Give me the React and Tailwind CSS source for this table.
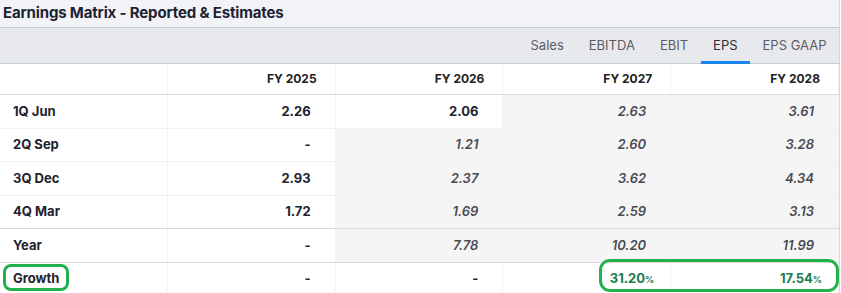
import React from 'react';

const years = ['FY 2025', 'FY 2026', 'FY 2027', 'FY 2028'];

// est: index of the first estimated column in that row
const rows = [
  { label: '1Q Jun', values: ['2.26', '2.06', '2.63', '3.61'], est: 2 },
  { label: '2Q Sep', values: ['-', '1.21', '2.60', '3.28'], est: 1 },
  { label: '3Q Dec', values: ['2.93', '2.37', '3.62', '4.34'], est: 1 },
  { label: '4Q Mar', values: ['1.72', '1.69', '2.59', '3.13'], est: 1, strong: true },
  { label: 'Year', values: ['-', '7.78', '10.20', '11.99'], est: 1, strong: true },
];

const tabs = ['Sales', 'EBITDA', 'EBIT', 'EPS', 'EPS GAAP'];

const Cell = ({ children, estimate, pad = 'pr-[24px]' }) => (
  <div
    className={`flex items-center justify-end ${pad} border-r border-[#f3f3f3] ${
      estimate ? 'bg-[#f5f5f5]' : 'bg-white'
    }`}
  >
    {children}
  </div>
);

const App = () => {
  return (
    <div className="relative w-[841px] h-[293px] overflow-hidden bg-white font-['Inter','Liberation_Sans',sans-serif] text-[#1f2230]">
      <div className="w-[840px] border-r border-[#d3d6dc]">
        {/* Title */}
        <div className="h-[28px] bg-[#f2f3f7] border-b border-[#c6cad2] flex items-center pl-[3px]">
          <h1 className="text-[15px] font-bold tracking-[-0.15px] text-[#1d2233]">Earnings Matrix - Reported &amp; Estimates</h1>
        </div>

        {/* Tabs */}
        <div className="h-[36px] bg-[#e8e9ec] border-b border-[#c6cad2] flex justify-end">
          {tabs.map((t) => {
            const active = t === 'EPS';
            return (
              <div
                key={t}
                className={`relative flex items-center px-[12.5px] text-[13px] ${
                  active ? 'text-[#2a2e3a]' : 'text-[#5a5d66]'
                }`}
              >
                {t}
                {active && <div className="absolute left-0 right-0 bottom-[-1px] h-[3px] bg-[#1a86ec]"></div>}
              </div>
            );
          })}
        </div>

        {/* Header */}
        <div className="grid grid-cols-5 h-[31px] border-b border-[#dcdcdc] text-[12px] font-bold text-[#222]">
          <div className="border-r border-[#f3f3f3]"></div>
          {years.map((y) => (
            <Cell key={y} pad="pr-[18px]">{y}</Cell>
          ))}
        </div>

        {/* Body */}
        {rows.map((r) => (
          <div
            key={r.label}
            className={`grid grid-cols-5 h-[33.6px] border-b ${r.strong ? 'border-[#d9d9d9]' : 'border-[#f1f1f1]'} text-[13px]`}
          >
            <div className="flex items-center pl-[13px] font-bold text-[#22232e] border-r border-[#f3f3f3]">{r.label}</div>
            {r.values.map((v, i) => {
              const est = i >= r.est;
              return (
                <Cell key={i} estimate={est}>
                  <span className={est ? 'italic font-semibold text-[#4a4b52]' : 'font-bold text-[#22232e]'}>{v}</span>
                </Cell>
              );
            })}
          </div>
        ))}

        {/* Growth */}
        <div className="grid grid-cols-5 h-[31px] text-[13px]">
          <div className="flex items-center pl-[13px] font-bold text-[#22232e] border-r border-[#f3f3f3]">Growth</div>
          <Cell><span className="font-bold text-[#22232e]">-</span></Cell>
          <Cell><span className="font-bold text-[#22232e]">-</span></Cell>
          <Cell pad="pr-[16px]">
            <span className="font-bold text-[#1b7c4e]">31.20<span className="text-[9px]">%</span></span>
          </Cell>
          <Cell pad="pr-[16px]">
            <span className="font-bold text-[#1b7c4e]">17.54<span className="text-[9px]">%</span></span>
          </Cell>
        </div>
      </div>

      {/* hand-drawn highlight marks */}
      <div className="absolute left-[3px] top-[264px] w-[66px] h-[27px] rounded-[8px] border-[3px] border-[#23b14d]"></div>
      <div className="absolute left-[599px] top-[259px] w-[240px] h-[33px] rounded-[11px] border-[3px] border-[#23b14d]"></div>
    </div>
  );
};

export default App;
